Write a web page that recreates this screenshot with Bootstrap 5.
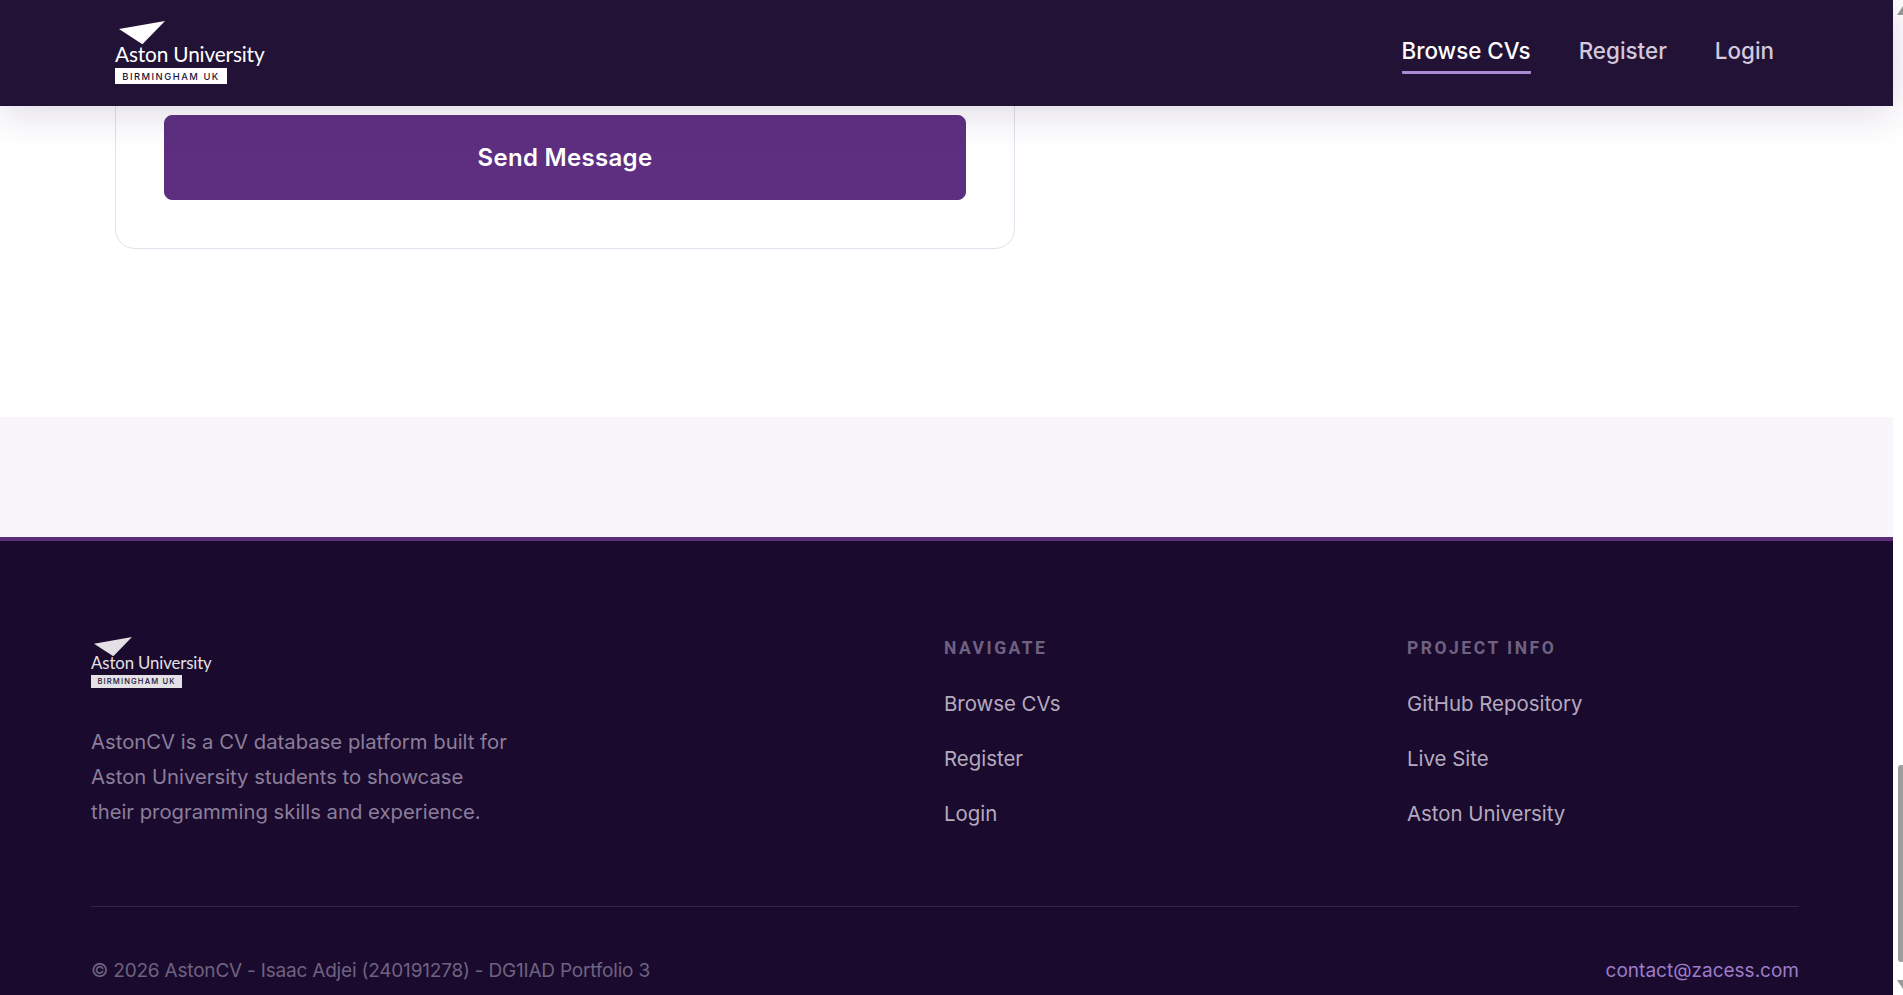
<!DOCTYPE html>
<html lang="en">
<head>
<meta charset="utf-8">
<title>AstonCV</title>
<link href="https://cdn.jsdelivr.net/npm/bootstrap@5.3.0/dist/css/bootstrap.min.css" rel="stylesheet">
<style>
html,body{height:995px;overflow:hidden;background:#fff;}
body{font-family:"Inter","Liberation Sans",sans-serif;}
.page-shell{height:995px;}
.page-main{width:1893px;height:995px;}
.rail{width:10px;overflow:hidden;}
.rail-up{width:0;height:0;border-left:6px solid transparent;border-right:6px solid transparent;border-bottom:9px solid #999;margin:6px 0 0 4px;}
.rail-thumb{width:5px;height:197px;margin:750px 0 0 5px;background:#9e9e9e;border-radius:3px 0 0 3px;}
.rail-down{width:0;height:0;border-left:6px solid transparent;border-right:6px solid transparent;border-top:9px solid #999;margin:18px 0 0 4px;}
.top-bar{height:106px;background:#211236;box-shadow:0 6px 40px rgba(60,30,100,.18);padding:0 119px 0 115px;z-index:5;}
.logo-mark{display:block;}
.logo-top{width:150px;}
.logo-foot{width:121px;opacity:.88;}
.logo-name{font-family:"Lato","Liberation Sans",sans-serif;color:#fff;font-weight:400;line-height:1;white-space:nowrap;}
.logo-plate{display:block;background:#fff;color:#211236;font-family:"Inter","Liberation Sans",sans-serif;font-weight:500;white-space:nowrap;text-align:center;}
.logo-top svg{width:46px;height:24px;margin:-1px 0 0 4px;}
.logo-top .logo-name{font-size:20.8px;letter-spacing:-.15px;margin-top:-1px;}
.logo-top .logo-plate{width:112px;height:16px;font-size:9.4px;letter-spacing:1.5px;line-height:17px;margin-top:4px;}
.logo-foot svg{width:38px;height:20px;margin:0 0 0 3px;}
.logo-foot .logo-name{font-size:16.8px;letter-spacing:-.12px;margin-top:-2px;}
.logo-foot .logo-plate{width:91px;height:13px;font-size:7.6px;letter-spacing:1.15px;line-height:13px;margin-top:3px;}
.top-links{gap:48px;}
.top-link{font-size:22.4px;font-weight:500;color:#d3c8dd;text-decoration:none;line-height:26px;padding:6px 0 7px;display:block;border-bottom:3px solid transparent;border-radius:1px;}
.top-link.on{color:#fff;border-bottom-color:#a98ad2;}
.form-block{height:417px;padding-left:115px;}
.form-panel{width:900px;height:249px;border:1px solid #e3dfec;border-radius:20px;padding:114px 48px 0;}
.send-btn{--bs-btn-bg:#5e2f80;--bs-btn-hover-bg:#5e2f80;--bs-btn-border-color:#5e2f80;--bs-btn-hover-border-color:#5e2f80;--bs-btn-color:#fff;--bs-btn-hover-color:#fff;--bs-btn-border-radius:8px;height:85px;width:802px;font-size:24px;font-weight:600;letter-spacing:.3px;}
.pale-band{height:120px;background:#f9f6fb;}
.site-foot{height:458px;background:#1a0a2e;border-top:4px solid #5a2d7a;padding:0 94px 0 91px;}
.foot-grid{display:grid;grid-template-columns:780px 390px 390px;column-gap:73px;padding-top:96px;height:365px;}
.foot-blurb{font-size:20.3px;line-height:35px;color:#8b7e9a;margin:36px 0 0;width:440px;}
.foot-head{font-family:"Roboto","Liberation Sans",sans-serif;font-size:17.5px;font-weight:700;letter-spacing:2.5px;color:#6f6280;line-height:22px;margin:0 0 30px;text-transform:uppercase;}
.foot-link{display:block;font-size:20.4px;color:#b5aabf;text-decoration:none;line-height:30px;margin-bottom:25px;}
.foot-end{border-top:1px solid #33254a;height:88px;font-size:19px;line-height:28px;padding-top:50px;}
.foot-copy{color:#6f6280;letter-spacing:-.2px;}
.foot-mail{color:#9d7cc9;text-decoration:none;}
</style>
</head>
<body class="m-0">
<div class="page-shell d-flex">
  <div class="page-main position-relative flex-shrink-0">
    <nav class="top-bar navbar position-absolute top-0 start-0 w-100 d-flex align-items-center justify-content-between flex-nowrap">
      <a class="logo-mark logo-top text-decoration-none" href="#">
        <svg viewBox="0 0 46 24" class="d-block"><polygon points="46,0 0,8 23.4,23.3" fill="#fff"/></svg>
        <span class="logo-name d-block">Aston University</span>
        <span class="logo-plate">BIRMINGHAM UK</span>
      </a>
      <div class="top-links d-flex align-items-center">
        <a class="top-link on" href="#">Browse CVs</a>
        <a class="top-link" href="#">Register</a>
        <a class="top-link" href="#">Login</a>
      </div>
    </nav>
    <section class="form-block bg-white">
      <div class="form-panel bg-white">
        <button type="button" class="send-btn btn d-block">Send Message</button>
      </div>
    </section>
    <div class="pale-band"></div>
    <footer class="site-foot">
      <div class="foot-grid">
        <div>
          <a class="logo-mark logo-foot text-decoration-none" href="#">
            <svg viewBox="0 0 46 24" class="d-block"><polygon points="46,0 0,8 23.4,23.3" fill="#fff"/></svg>
            <span class="logo-name d-block">Aston University</span>
            <span class="logo-plate">BIRMINGHAM UK</span>
          </a>
          <p class="foot-blurb">AstonCV is a CV database platform built for<br>Aston University students to showcase<br>their programming skills and experience.</p>
        </div>
        <div>
          <h6 class="foot-head">Navigate</h6>
          <a class="foot-link" href="#">Browse CVs</a>
          <a class="foot-link" href="#">Register</a>
          <a class="foot-link" href="#">Login</a>
        </div>
        <div>
          <h6 class="foot-head">Project Info</h6>
          <a class="foot-link" href="#">GitHub Repository</a>
          <a class="foot-link" href="#">Live Site</a>
          <a class="foot-link" href="#">Aston University</a>
        </div>
      </div>
      <div class="foot-end d-flex justify-content-between align-items-start">
        <span class="foot-copy">© 2026 AstonCV - Isaac Adjei (240191278) - DG1IAD Portfolio 3</span>
        <a class="foot-mail" href="#">contact@zacess.com</a>
      </div>
    </footer>
  </div>
  <div class="rail flex-shrink-0 bg-white">
    <div class="rail-up"></div>
    <div class="rail-thumb"></div>
    <div class="rail-down"></div>
  </div>
</div>
<script src="https://cdn.jsdelivr.net/npm/bootstrap@5.3.0/dist/js/bootstrap.bundle.min.js"></script>
</body>
</html>
